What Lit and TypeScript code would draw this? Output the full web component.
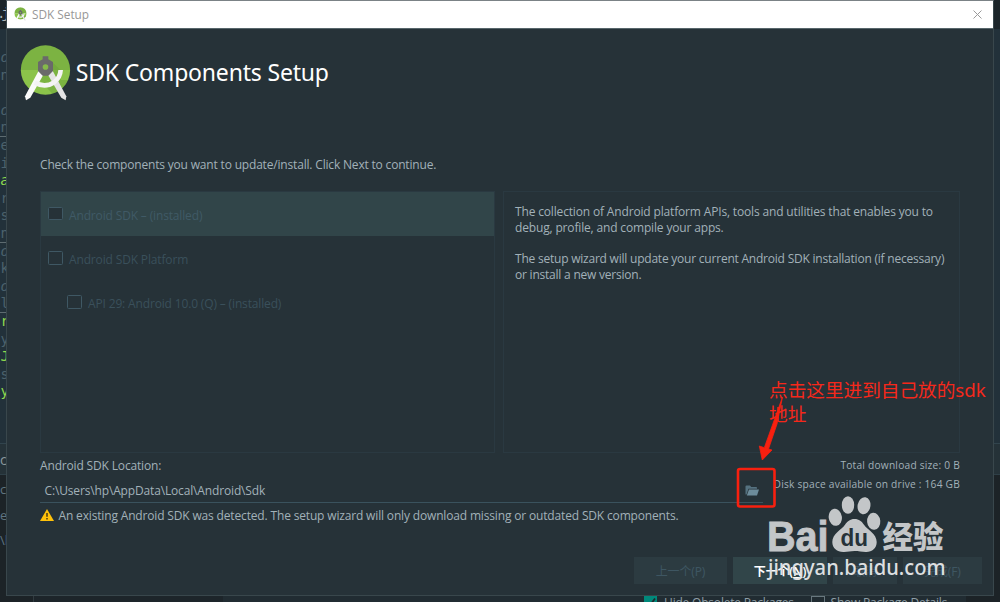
import { LitElement, html, css, svg } from "lit";
import { customElement, property } from "lit/decorators.js";
import { classMap } from "lit/directives/class-map.js";

interface CodeLine {
  t: string;
  hot?: boolean;
  rule?: boolean;
  italic?: boolean;
}

const CODE: CodeLine[] = [
  { t: "d", italic: true },
  { t: "n" },
  { t: "" },
  { t: "d", italic: true },
  { t: "n", rule: true },
  { t: "e" },
  { t: "i" },
  { t: "a", hot: true, italic: true },
  { t: "r" },
  { t: "s" },
  { t: "n", rule: true },
  { t: "d", italic: true },
  { t: "k" },
  { t: "d", italic: true },
  { t: "l", rule: true },
  { t: "r", hot: true },
  { t: "y" },
  { t: "J", hot: true },
  { t: "s" },
  { t: "y", hot: true },
];

const studioLogo = svg`
  <defs>
    <clipPath id="disc"><circle cx="136.500" cy="210" r="74" /></clipPath>
  </defs>
  <g clip-path="url(#disc)">
    <rect x="60" y="134" width="154" height="77" fill="#7cb342" />
    <rect x="60" y="210" width="154" height="78" fill="#8bc34a" />
    <path d="M156 186l26 24v30l30 0v50h-46l-50-52z" fill="#689f38" opacity=".45" />
  </g>
  <path d="M116 212l16 9-41 72-13 8-3-12z" fill="#fafafa" />
  <path d="M158 212l-16 9 42 72 13 8 2-12z" fill="#e4e4e4" />
  <path d="M104 248Q136 265 162 247Q181 233 182 210" fill="none" stroke="#f4f4f4" stroke-width="14" />
  <path d="M128 169h17v9l14 8v27l-14 14h-17l-14-14v-27l14-8z" fill="#6a6a6a" />
  <circle cx="136.500" cy="201" r="8.500" fill="#85b94a" />`;

@customElement("check-item")
class CheckItem extends LitElement {
  @property() label = "";
  @property({ type: Boolean, reflect: true }) selected = false;
  @property({ type: Boolean, reflect: true }) nested = false;
  static styles = css`
    :host {
      display: flex;
      box-sizing: border-box;
      height: 44.3px;
      padding: 0 0 0 7px;
      gap: 6px;
      align-items: center;
      color: #3a505b;
      font-size: 12px;
    }
    :host([selected]) {
      background: #314549;
      color: #405a66;
    }
    :host([nested]) {
      padding-left: 26px;
    }
    .box {
      box-sizing: border-box;
      width: 15px;
      height: 13.5px;
      border: 1.5px solid #3f5864;
      border-radius: 1.5px;
      background: #263238;
      margin-bottom: 1px;
    }
    .label {
      padding-top: 2px;
      white-space: nowrap;
      letter-spacing: -0.15px;
    }
  `;
  render() {
    return html`<span class="box"></span><span class="label">${this.label}</span>`;
  }
}

@customElement("baidu-mark")
class BaiduMark extends LitElement {
  static styles = css`
    :host {
      display: block;
      color: #c3c6c8;
    }
    .mark {
      display: block;
    }
    .latin {
      font: bold 42px "Liberation Sans", sans-serif;
      stroke: #c3c6c8;
      stroke-width: 0.9px;
    }
    .du {
      font: bold 24px "Liberation Sans", sans-serif;
    }
    .han {
      font: 900 31px "Noto Sans CJK SC", sans-serif;
    }
    .url {
      font: 500 21.5px "Noto Sans", "Open Sans", sans-serif;
    }
  `;
  render() {
    return html`<svg class="mark" width="190" height="92" viewBox="0 0 190 92">
      <g fill="#c3c6c8">
        <text class="latin" x="7" y="61" textLength="61.500" lengthAdjust="spacingAndGlyphs">Bai</text>
        <ellipse cx="75.300" cy="27.300" rx="6.600" ry="8.600" transform="rotate(-8 75.300 27.300)" />
        <ellipse cx="88" cy="15" rx="6.200" ry="8.800" />
        <ellipse cx="104" cy="15.700" rx="6.400" ry="8.600" transform="rotate(10 104 15.700)" />
        <ellipse cx="113.700" cy="31.300" rx="6.600" ry="8.500" transform="rotate(-5 113.700 31.300)" />
        <path d="M94.500 29c4.500 0 7.500 2.700 9.500 5.800 3.500 5.200 12.700 9.200 12.700 17.200 0 6.500-5 10.300-11 10-4-.3-7-1-11.200-1s-6.500.8-10.500 1c-6.500.3-11.700-3.500-11.700-10 0-8 9-12 12.700-17.200C87.300 31.500 90 29 94.500 29z" />
        <text class="han" x="122.500" y="58" textLength="61" lengthAdjust="spacingAndGlyphs">经验</text>
      </g>
      <text class="du" x="80.500" y="55.500" fill="#263238" textLength="27.500" lengthAdjust="spacingAndGlyphs">du</text>
      <text class="url" x="8" y="85" fill="#dcdfe0" textLength="177.500" lengthAdjust="spacingAndGlyphs">jingyan.baidu.com</text>
    </svg>`;
  }
}

@customElement("app-root")
class AppRoot extends LitElement {
  static styles = css`
    :host {
      display: block;
      position: relative;
      width: 1000px;
      height: 602px;
      overflow: hidden;
      background: #1d262b;
      font-family: "Open Sans", "Noto Sans", "Noto Sans CJK SC", sans-serif;
      color: #a2b1b8;
    }
    .editor {
      display: grid;
      grid-template-rows: 29px 414px 32px 121px 6px;
      height: 602px;
    }
    .tabs {
      background: #1c252a;
      font: 14px/28px "Liberation Mono", monospace;
      color: #a9b2b6;
      text-indent: -3px;
      letter-spacing: -4px;
      overflow: hidden;
    }
    .code {
      background: #22313a;
      padding-top: 20px;
      font: 14px/17.6px "DejaVu Sans Mono", monospace;
      color: #4c626d;
    }
    .line {
      width: 8px;
      height: 17.6px;
      box-sizing: border-box;
      text-indent: 0.5px;
    }
    .line.hot {
      color: #8fd94f;
    }
    .line.rule {
      border-bottom: 1px solid #5d6b70;
    }
    .line.italic {
      font-style: italic;
    }
    .pane {
      background: #253238;
      border-top: 1px solid #31444d;
      border-bottom: 1px solid #2e3f47;
      box-sizing: border-box;
      font-size: 14px;
      line-height: 32px;
      color: #8a989e;
    }
    .tree {
      background: #1c2327;
      font-size: 13px;
      line-height: 25.5px;
      color: #5f7480;
      padding-top: 2px;
      box-sizing: border-box;
      overflow: hidden;
    }
    .footer {
      display: flex;
      background: #1c2327;
      overflow: hidden;
    }
    .gutter {
      width: 33px;
      border-right: 1px solid #313b40;
    }
    .side {
      width: 189px;
      background: #1d252a;
    }
    .options {
      width: 743px;
      box-sizing: border-box;
      padding-left: 421px;
      display: flex;
      background: #212c32;
      font-size: 12px;
      line-height: 14px;
      letter-spacing: -0.2px;
      color: #8f9ea6;
      white-space: nowrap;
    }
    .tick {
      flex: none;
      width: 13px;
      height: 13px;
      margin: 0 7px 0 0;
      background: #00897b;
      display: block;
    }
    .tick.off {
      background: none;
      border: 1px solid #68777e;
      box-sizing: border-box;
      width: 14px;
      margin-right: 6px;
    }
    .opt {
      width: 146.5px;
    }

    .dialog {
      position: absolute;
      left: 6px;
      top: 0;
      width: 988px;
      height: 596px;
      box-sizing: border-box;
      border: 1px solid #39474c;
      border-top-color: #7b8286;
      background: #263238;
      display: flex;
      flex-direction: column;
    }
    .titlebar {
      flex: none;
      height: 28px;
      box-sizing: border-box;
      background: #fff;
      border-bottom: 1px solid #57666b;
      display: flex;
      align-items: center;
      padding: 0 11px 1px 7px;
      color: #979797;
      font-size: 11.8px;
    }
    .app {
      flex: 1;
      padding-left: 5px;
    }
    .header {
      flex: none;
      display: flex;
      height: 125px;
      box-sizing: border-box;
      padding: 15px 0 0 13px;
      gap: 4.5px;
    }
    .title {
      font: 23px/56px "Noto Sans", sans-serif;
      letter-spacing: -0.18px;
      color: #fff;
      white-space: nowrap;
    }
    .body {
      padding: 0 33px;
      font-size: 12px;
      letter-spacing: -0.16px;
      white-space: nowrap;
    }
    .prompt {
      height: 21px;
      line-height: 21px;
      letter-spacing: -0.18px;
    }
    .panels {
      margin-top: 16px;
      display: grid;
      grid-template-columns: 455px 457px;
      gap: 8px;
      height: 262px;
    }
    .list,
    .about {
      border: 1px solid #2a3941;
      box-sizing: border-box;
    }
    .about {
      padding: 12px 0 0 11px;
      line-height: 15.7px;
    }
    .para {
      margin-bottom: 15.7px;
    }
    .para.tight {
      letter-spacing: -0.22px;
    }
    .where {
      display: grid;
      grid-template-columns: 723px 197px;
      height: 50px;
    }
    .caption {
      height: 25px;
      line-height: 25px;
    }
    .path {
      display: flex;
      align-items: center;
      justify-content: space-between;
      height: 25px;
      box-sizing: border-box;
      border-bottom: 1px solid #3a525d;
      padding: 0 4px 0 4.5px;
      letter-spacing: -0.15px;
    }
    .sizes {
      font-size: 10.2px;
      line-height: 18.5px;
      letter-spacing: 0.22px;
      padding-top: 3px;
      display: flex;
      flex-direction: column;
      align-items: flex-end;
    }
    .warn {
      display: flex;
      align-items: center;
      gap: 4.5px;
      height: 24px;
    }
    .buttons {
      display: flex;
      justify-content: flex-end;
      gap: 6px;
      margin: 30px -22px 0 0;
      height: 27px;
      font: 12px/29px "Noto Sans", "Noto Sans CJK SC", sans-serif;
      text-align: center;
    }
    .btn {
      background: #2c3b41;
      color: #3e5662;
    }
    .btn.main {
      background: #314549;
      color: #fff;
      font-weight: 600;
    }
    .w93 {
      width: 93px;
    }
    .w94 {
      width: 94px;
    }
    .w64 {
      width: 64px;
    }
    .w79 {
      width: 79px;
    }

    .note {
      position: absolute;
      left: 769px;
      top: 378px;
      font: 18.7px/24px "Noto Sans", "Noto Sans CJK SC", sans-serif;
      letter-spacing: -0.05px;
      color: #f5281b;
      white-space: nowrap;
    }
    .arrow {
      position: absolute;
      left: 730px;
      top: 390px;
    }
    .brand {
      position: absolute;
      left: 760px;
      top: 490px;
    }
  `;

  render() {
    return html`
      <div class="editor">
        <div class="tabs">.j</div>
        <div class="code">
          ${CODE.map(
            (l) =>
              html`<div class=${classMap({ line: true, hot: !!l.hot, rule: !!l.rule, italic: !!l.italic })}>${l.t}</div>`
          )}
        </div>
        <div class="pane">c</div>
        <div class="tree">
          <div>co</div>
          <div>e</div>
          <div>\\l</div>
        </div>
        <div class="footer">
          <div class="gutter"></div>
          <div class="side"></div>
          <div class="options">
            <svg class="tick" viewBox="0 0 13 13"><path d="M2.500 7l3 3L11 2.500" fill="none" stroke="#1d2a2f" stroke-width="1.800" /></svg>
            <span class="opt">Hide Obsolete Packages</span>
            <span class="tick off"></span>
            <span>Show Package Details</span>
          </div>
        </div>
      </div>

      <div class="dialog">
        <div class="titlebar">
          <svg width="13" height="14" viewBox="60 132 154 171">${studioLogo}</svg>
          <span class="app">SDK Setup</span>
          <svg width="9" height="9" viewBox="0 0 9 9"><path d="M.5.500l8 8M8.500.500l-8 8" stroke="#9a9a9a" stroke-width="1" /></svg>
        </div>
        <div class="header">
          <svg width="51.300" height="57" viewBox="60 132 154 171">${studioLogo}</svg>
          <div class="title">SDK Components Setup</div>
        </div>
        <div class="body">
          <div class="prompt">Check the components you want to update/install. Click Next to continue.</div>
          <div class="panels">
            <div class="list">
              <check-item selected label="Android SDK – (installed)"></check-item>
              <check-item label="Android SDK Platform"></check-item>
              <check-item nested label="API 29: Android 10.0 (Q) – (installed)"></check-item>
            </div>
            <div class="about">
              <div class="para">
                The collection of Android platform APIs, tools and utilities that enables you to<br />debug, profile, and
                compile your apps.
              </div>
              <div class="para tight">
                The setup wizard will update your current Android SDK installation (if necessary)<br />or install a new
                version.
              </div>
            </div>
          </div>
          <div class="where">
            <div>
              <div class="caption">Android SDK Location:</div>
              <div class="path">
                <span class="file">C:\\Users\\hp\\AppData\\Local\\Android\\Sdk</span>
                <svg width="14" height="11" viewBox="0 0 14 11">
                  <path d="M.5 9.500V1.500Q.5.500 1.500.500h3.500l1.200 1.500h5Q12 2 12 3v.8H3.500L1.500 9.500z" fill="#557280" />
                  <path d="M4 4.600h10L12 10.500H1.800z" fill="#6d8c9b" />
                </svg>
              </div>
            </div>
            <div class="sizes">
              <span>Total download size: 0 B</span>
              <span>Disk space available on drive : 164 GB</span>
            </div>
          </div>
          <div class="warn">
            <svg width="14" height="12" viewBox="0 0 14 12">
              <path d="M7 0l7 12H0z" fill="#ffc20a" />
              <path d="M7 4v3.800M7 9v1.500" stroke="#4a3a10" stroke-width="1.500" />
            </svg>
            <span class="msg">An existing Android SDK was detected. The setup wizard will only download missing or outdated SDK components.</span>
          </div>
          <div class="buttons">
            <div class="btn w93">上一个(P)</div>
            <div class="btn main w94">下一个(<u>N</u>)</div>
            <div class="btn w64">取消</div>
            <div class="btn w79">完成(F)</div>
          </div>
        </div>
      </div>

      <div class="note">点击这里进到自己放的sdk<br />地址</div>
      <svg class="arrow" width="60" height="120" viewBox="0 0 60 120">
        <path d="M52.500 7L34.300 57.700 29.300 56l3 14L42 60l-3.500-1L47 34z" fill="#f8200f" stroke="#f8200f" stroke-width=".8" />
        <rect x="8" y="79" width="36.500" height="37.500" rx="2" fill="none" stroke="#f8200f" stroke-width="2.600" />
      </svg>
      <baidu-mark class="brand"></baidu-mark>
    `;
  }
}
